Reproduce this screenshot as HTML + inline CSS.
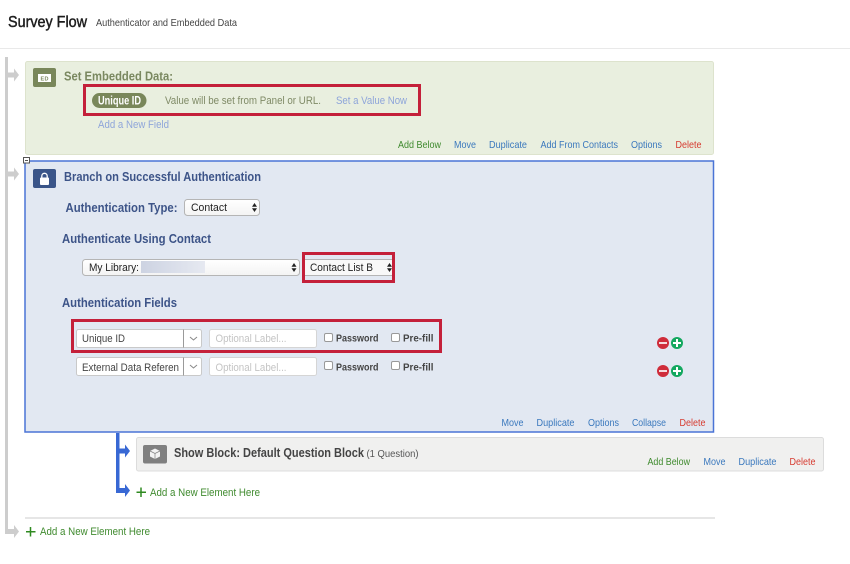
<!DOCTYPE html>
<html>
<head>
<meta charset="utf-8">
<title>Survey Flow</title>
<style>
html,body{margin:0;padding:0;background:#fff;width:850px;height:564px;overflow:hidden}
svg{display:block;position:absolute;left:0;top:0;filter:blur(.3px)}
text{font-family:"Liberation Sans",sans-serif;font-size:10.5px;white-space:pre}
.g{fill:#3f8a2e}.l{fill:#3a78bd}.r{fill:#d63a2f}
.n{fill:#3d5488;font-weight:bold;font-size:12.5px}
.m{stroke-width:.25px;paint-order:stroke}
</style>
</head>
<body>
<svg width="850" height="564" viewBox="0 0 850 564" xmlns="http://www.w3.org/2000/svg">
<defs>
<linearGradient id="sel" x1="0" y1="0" x2="0" y2="1"><stop offset="0" stop-color="#fff"/><stop offset="1" stop-color="#f3f3f3"/></linearGradient>
<linearGradient id="blr" x1="0" y1="0" x2="1" y2="0"><stop offset="0" stop-color="#cdd3e2"/><stop offset="1" stop-color="#e6e9f1"/></linearGradient>
</defs>
<rect width="850" height="564" fill="#fff"/>

<!-- header -->
<text class="m" x="8" y="27" textLength="79" lengthAdjust="spacingAndGlyphs" stroke="#1d1d1d" style="font-size:16px;fill:#1d1d1d;stroke-width:.45px">Survey Flow</text>
<text x="96" y="26" textLength="141" lengthAdjust="spacingAndGlyphs" style="font-size:10.5px;fill:#444">Authenticator and Embedded Data</text>
<rect x="0" y="48" width="850" height="1" fill="#e9e9e9"/>

<!-- gray flow line -->
<rect x="5" y="57" width="3" height="476" fill="#cdcdcd"/>
<path d="M8 72.500h6v-4l5 6.500-5 6.500v-4h-6z" fill="#cdcdcd"/>
<path d="M8 171.500h6v-4l5 6.500-5 6.500v-4h-6z" fill="#cdcdcd"/>
<path d="M5 529h9v-4l5 6.500-5 6.500v-4h-9z" fill="#cdcdcd"/>

<!-- embedded data box -->
<rect x="25.500" y="61.500" width="688" height="93" rx="2" fill="#e9efdf" stroke="#dde3cd"/>
<rect x="33" y="68" width="23" height="19" rx="2" fill="#79875a"/>
<rect x="38" y="74" width="13" height="8" fill="#fff"/>
<text x="40.500" y="80.500" textLength="8" style="font-size:5.500px;font-weight:bold;fill:#79875a">ED</text>
<text x="64" y="80.500" textLength="109" lengthAdjust="spacingAndGlyphs" style="font-size:12.500px;font-weight:bold;fill:#7a8860">Set Embedded Data:</text>
<rect x="84.500" y="85.500" width="335" height="29" fill="none" stroke="#c4203a" stroke-width="3"/>
<rect x="92" y="93" width="54.500" height="15" rx="7.500" fill="#79875a"/>
<text x="98" y="104.500" textLength="43" lengthAdjust="spacingAndGlyphs" style="font-size:11.500px;font-weight:bold;fill:#fff">Unique ID</text>
<text x="165" y="104" textLength="156" lengthAdjust="spacingAndGlyphs" style="font-size:11px;fill:#7f8a66">Value will be set from Panel or URL.</text>
<text x="336" y="104" textLength="71" lengthAdjust="spacingAndGlyphs" style="font-size:11px;fill:#8ea5da">Set a Value Now</text>
<text x="98" y="128" textLength="71" lengthAdjust="spacingAndGlyphs" style="font-size:11px;fill:#8ea5da">Add a New Field</text>
<text class="g" x="398" y="148" textLength="43" lengthAdjust="spacingAndGlyphs">Add Below</text>
<text class="l" x="454" y="148" textLength="22" lengthAdjust="spacingAndGlyphs">Move</text>
<text class="l" x="489" y="148" textLength="38" lengthAdjust="spacingAndGlyphs">Duplicate</text>
<text class="l" x="540.500" y="148" textLength="77.500" lengthAdjust="spacingAndGlyphs">Add From Contacts</text>
<text class="l" x="631" y="148" textLength="31" lengthAdjust="spacingAndGlyphs">Options</text>
<text class="r" x="675.500" y="148" textLength="26" lengthAdjust="spacingAndGlyphs">Delete</text>

<!-- branch box -->
<rect x="25" y="161" width="688.500" height="271" fill="#e2e8f2" stroke="#4a74d6" stroke-width="1.500"/>
<rect x="23.500" y="157.500" width="6" height="5.500" fill="#fff" stroke="#555" stroke-width="1"/>
<rect x="25" y="160" width="3" height="1" fill="#555"/>
<rect x="33" y="169" width="23" height="19" rx="2" fill="#3a5589"/>
<rect x="40" y="177.500" width="9" height="7.500" rx="1" fill="#fff"/>
<path d="M41.800 178v-2a2.700 2.700 0 0 1 5.400 0v2" fill="none" stroke="#fff" stroke-width="1.300"/>
<text class="n" x="64" y="181" textLength="197" lengthAdjust="spacingAndGlyphs">Branch on Successful Authentication</text>

<text class="n" x="65.500" y="212" textLength="112" lengthAdjust="spacingAndGlyphs">Authentication Type:</text>
<rect x="184.500" y="199.500" width="75" height="16" rx="3" fill="url(#sel)" stroke="#b5b5b5"/>
<text x="191" y="211" textLength="36" lengthAdjust="spacingAndGlyphs" style="font-size:11px;fill:#222">Contact</text>
<path d="M252 206.800l2.500-3.800 2.500 3.800zM252 208.200l2.500 3.800 2.500-3.800z" fill="#222"/>

<text class="n" x="62" y="243" textLength="149" lengthAdjust="spacingAndGlyphs">Authenticate Using Contact</text>
<rect x="82.500" y="259.500" width="217" height="16" rx="3" fill="url(#sel)" stroke="#b5b5b5"/>
<text x="89" y="271" textLength="50" lengthAdjust="spacingAndGlyphs" style="font-size:11px;fill:#222">My Library:</text>
<rect x="141" y="261" width="64" height="12" fill="url(#blr)"/>
<path d="M291.500 266.800l2.500-3.800 2.500 3.800zM291.500 268.200l2.500 3.800 2.500-3.800z" fill="#222"/>
<rect x="305" y="259" width="87" height="17" fill="#f8f8f8"/>
<path d="M305 259.500h87M305 275.500h87" stroke="#b5b5b5"/>
<rect x="303.500" y="253.500" width="90" height="28" fill="none" stroke="#c4203a" stroke-width="3"/>
<text x="310" y="271" textLength="63" lengthAdjust="spacingAndGlyphs" style="font-size:11px;fill:#222">Contact List B</text>
<path d="M387 266.800l2.500-3.800 2.500 3.800zM387 268.200l2.500 3.800 2.500-3.800z" fill="#222"/>

<text class="n" x="62" y="307" textLength="115" lengthAdjust="spacingAndGlyphs">Authentication Fields</text>

<!-- field rows -->
<rect x="72.500" y="320.500" width="368" height="31" fill="none" stroke="#c4203a" stroke-width="3"/>
<rect x="76.500" y="329.500" width="125" height="18" rx="2" fill="#fff" stroke="#c9c9c9"/>
<rect x="183" y="329.500" width="1" height="18" fill="#9a9a9a"/>
<path d="M190 337l3.500 3 3.500-3" fill="none" stroke="#888" stroke-width="1"/>
<text x="82" y="342" textLength="43" lengthAdjust="spacingAndGlyphs" style="font-size:11px;fill:#444">Unique ID</text>
<rect x="209.500" y="329.500" width="107" height="18" rx="2" fill="#fff" stroke="#d5d5d5"/>
<text x="215.500" y="342" textLength="71" lengthAdjust="spacingAndGlyphs" style="font-size:11px;fill:#c4c4c4">Optional Label...</text>
<rect x="324.500" y="333.500" width="8" height="8" rx="1.500" fill="#fff" stroke="#999"/>
<text x="336" y="341.500" textLength="42.500" lengthAdjust="spacingAndGlyphs" style="font-size:10.500px;font-weight:bold;fill:#444">Password</text>
<rect x="391.500" y="333.500" width="8" height="8" rx="1.500" fill="#fff" stroke="#999"/>
<text x="403" y="341.500" textLength="30.500" lengthAdjust="spacingAndGlyphs" style="font-size:10.500px;font-weight:bold;fill:#444">Pre-fill</text>
<circle cx="663" cy="343" r="6" fill="#cf2c3a"/><rect x="659" y="342" width="8" height="2" fill="#f5d9dc"/>
<circle cx="677" cy="343" r="6" fill="#13a85f"/><rect x="673" y="342" width="8" height="2" fill="#fff"/><rect x="676" y="339" width="2" height="8" fill="#fff"/>

<rect x="76.500" y="357.500" width="125" height="18" rx="2" fill="#fff" stroke="#c9c9c9"/>
<rect x="183" y="357.500" width="1" height="18" fill="#9a9a9a"/>
<path d="M190 365l3.500 3 3.500-3" fill="none" stroke="#888" stroke-width="1"/>
<text x="82" y="371" textLength="97" lengthAdjust="spacingAndGlyphs" style="font-size:11px;fill:#444">External Data Referen</text>
<rect x="209.500" y="357.500" width="107" height="18" rx="2" fill="#fff" stroke="#d5d5d5"/>
<text x="215.500" y="371" textLength="71" lengthAdjust="spacingAndGlyphs" style="font-size:11px;fill:#c4c4c4">Optional Label...</text>
<rect x="324.500" y="361.500" width="8" height="8" rx="1.500" fill="#fff" stroke="#999"/>
<text x="336" y="370.500" textLength="42.500" lengthAdjust="spacingAndGlyphs" style="font-size:10.500px;font-weight:bold;fill:#444">Password</text>
<rect x="391.500" y="361.500" width="8" height="8" rx="1.500" fill="#fff" stroke="#999"/>
<text x="403" y="370.500" textLength="30.500" lengthAdjust="spacingAndGlyphs" style="font-size:10.500px;font-weight:bold;fill:#444">Pre-fill</text>
<circle cx="663" cy="371" r="6" fill="#cf2c3a"/><rect x="659" y="370" width="8" height="2" fill="#f5d9dc"/>
<circle cx="677" cy="371" r="6" fill="#13a85f"/><rect x="673" y="370" width="8" height="2" fill="#fff"/><rect x="676" y="367" width="2" height="8" fill="#fff"/>

<text class="l" x="501.500" y="426" textLength="22" lengthAdjust="spacingAndGlyphs">Move</text>
<text class="l" x="536.500" y="426" textLength="38" lengthAdjust="spacingAndGlyphs">Duplicate</text>
<text class="l" x="588" y="426" textLength="31" lengthAdjust="spacingAndGlyphs">Options</text>
<text class="l" x="632" y="426" textLength="34" lengthAdjust="spacingAndGlyphs">Collapse</text>
<text class="r" x="679.500" y="426" textLength="26" lengthAdjust="spacingAndGlyphs">Delete</text>

<!-- blue flow -->
<rect x="116" y="433" width="3.500" height="60" fill="#3868d4"/>
<path d="M119 448.500h6v-4l5 6.500-5 6.500v-4h-6z" fill="#3868d4"/>
<path d="M116 488h9v-4l5 6.500-5 6.500v-4h-9z" fill="#3868d4"/>

<!-- show block -->
<rect x="136.500" y="437.500" width="687" height="33.500" rx="2" fill="#f0f0ef" stroke="#dcdcdc"/>
<rect x="143" y="445" width="24" height="18.500" rx="2" fill="#808080"/>
<path d="M155 448.500l5 2.500v5.500l-5 2.500-5-2.500v-5.500z" fill="#f2f2f2"/>
<path d="M150 451l5 2.500 5-2.500M155 453.500v5.500" fill="none" stroke="#808080" stroke-width=".7"/>
<text x="174" y="457" textLength="190" lengthAdjust="spacingAndGlyphs" style="font-size:12.500px;font-weight:bold;fill:#444">Show Block: Default Question Block</text>
<text x="366.500" y="457" textLength="52" lengthAdjust="spacingAndGlyphs" style="font-size:10.500px;fill:#555">(1 Question)</text>
<text class="g" x="647.500" y="465" textLength="42.500" lengthAdjust="spacingAndGlyphs">Add Below</text>
<text class="l" x="703.500" y="465" textLength="22" lengthAdjust="spacingAndGlyphs">Move</text>
<text class="l" x="738.500" y="465" textLength="38" lengthAdjust="spacingAndGlyphs">Duplicate</text>
<text class="r" x="789.500" y="465" textLength="26" lengthAdjust="spacingAndGlyphs">Delete</text>

<!-- add elements -->
<path d="M141 487.500v9.500M136.500 492.300h9.500" stroke="#2f8a20" stroke-width="1.500"/>
<text x="150" y="496" textLength="110" lengthAdjust="spacingAndGlyphs" style="font-size:11px;fill:#3f8a2e">Add a New Element Here</text>
<rect x="25" y="517" width="690" height="2" fill="#e6e6e6"/>
<path d="M30.500 527v9.500M26 531.800h9.500" stroke="#2f8a20" stroke-width="1.500"/>
<text x="40" y="535" textLength="110" lengthAdjust="spacingAndGlyphs" style="font-size:11px;fill:#3f8a2e">Add a New Element Here</text>
</svg>
</body>
</html>
